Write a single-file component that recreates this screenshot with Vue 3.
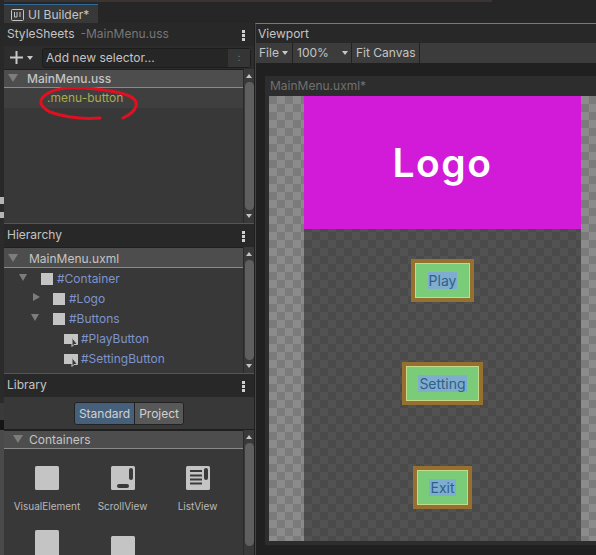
<script setup>
const tree = [
  { name: '#Container', indent: 15, arrow: 'down', icon: 'box' },
  { name: '#Logo', indent: 27, arrow: 'right', icon: 'box' },
  { name: '#Buttons', indent: 27, arrow: 'down', icon: 'box' },
  { name: '#PlayButton', indent: 38, icon: 'button' },
  { name: '#SettingButton', indent: 38, icon: 'button' }
]
const buttons = ['Play', 'Setting', 'Exit']
</script>

<template>
  <div class="app">
    <i class="edge"></i>
    <div class="topbar">
      <div class="tab">
        <svg class="tab-icon" width="13" height="12" viewBox="0 0 13 12">
          <rect x="0.5" y="0.5" width="12" height="11" rx="1" fill="none" stroke="#c4c4c4" />
          <path d="M3.500 3v5h2.500V3M9 3v5" fill="none" stroke="#c4c4c4" />
        </svg>
        <span>UI Builder*</span>
      </div>
      <span class="clipped">Visual Element</span>
    </div>

    <div class="main">
      <aside class="left">
        <section class="panel sheets">
          <header class="panel-head">
            <span>StyleSheets</span><span class="file-hint">-MainMenu.uss</span>
            <i class="dots"></i>
          </header>
          <div class="selector-bar">
            <div class="plus">
              <svg width="13" height="13" viewBox="0 0 13 13"><path d="M6.500 0v13M0 6.500h13" stroke="#c8c8c8" stroke-width="2" /></svg>
              <i class="caret"></i>
            </div>
            <div class="selector-input"><span>Add new selector...</span><b>:</b></div>
          </div>
          <div class="list">
            <div class="list-body">
              <div class="list-title"><i class="tri down"></i><span>MainMenu.uss</span></div>
              <div class="selector-row"><span>.menu-button</span></div>
            </div>
            <div class="scroll"><i class="up"></i><div class="thumb"></div><i class="dn"></i></div>
          </div>
          <svg class="scribble" width="110" height="40" viewBox="0 0 110 40">
            <path d="M61 31C48 32 28 31 11 25C4 21 1 18 2 14C3 8 14 2 28 1C44 0 74 3 88 8C96 11 98 15 97 19C96 24 92 27 84 31" fill="none" stroke="#e01020" stroke-width="3" stroke-linecap="round" />
          </svg>
        </section>

        <section class="panel hierarchy">
          <header class="panel-head"><span>Hierarchy</span><i class="dots"></i></header>
          <div class="list">
            <div class="list-body">
              <div class="list-title tall"><i class="tri down"></i><span class="uxml">MainMenu.uxml</span></div>
              <div class="tree">
                <div v-for="item in tree" :key="item.name" class="tree-row" :style="{ paddingLeft: item.indent + 'px' }">
                  <i class="tree-arrow" :class="item.arrow"></i>
                  <i v-if="item.icon === 'box'" class="box"></i>
                  <svg v-else class="btn-icon" width="15" height="13" viewBox="0 0 15 13">
                    <rect x="0" y="0" width="14" height="10" fill="#c4c4c4" />
                    <path d="M8 3.500v9l2-2h3.500z" fill="#3a3a3a" stroke="#c4c4c4" />
                  </svg>
                  <span>{{ item.name }}</span>
                </div>
              </div>
            </div>
            <div class="scroll"><i class="up"></i><div class="thumb"></div><i class="dn"></i></div>
          </div>
        </section>

        <section class="panel library">
          <header class="panel-head"><span>Library</span><i class="dots"></i></header>
          <div class="lib-tabs">
            <div class="segment">
              <span class="seg on">Standard</span>
              <span class="seg">Project</span>
            </div>
          </div>
          <div class="list">
            <div class="list-body">
              <div class="list-title plain"><i class="tri down small"></i><span>Containers</span></div>
              <div class="lib-grid">
                <div class="lib-item">
                  <i class="lib-icon"></i>
                  <span>VisualElement</span>
                </div>
                <div class="lib-item">
                  <svg class="lib-svg" width="24" height="24" viewBox="0 0 24 24">
                    <rect width="24" height="24" rx="1.500" fill="#c4c4c4" />
                    <rect x="18" y="2" width="4" height="12" rx="2" fill="#3a3a3a" />
                    <rect x="6" y="18" width="12" height="4" rx="2" fill="#3a3a3a" />
                  </svg>
                  <span>ScrollView</span>
                </div>
                <div class="lib-item">
                  <svg class="lib-svg" width="24" height="24" viewBox="0 0 24 24">
                    <rect width="24" height="24" rx="1.500" fill="#c4c4c4" />
                    <path d="M4 5h12M4 9.500h12M4 13.500h12M4 17.500h12" stroke="#3a3a3a" stroke-width="2" />
                    <rect x="18" y="2" width="4" height="12" rx="2" fill="#3a3a3a" />
                  </svg>
                  <span>ListView</span>
                </div>
                <div class="lib-item"><i class="lib-icon tall"></i></div>
                <div class="lib-item"><i class="lib-icon low"></i></div>
              </div>
            </div>
            <div class="scroll"><i class="up"></i><div class="thumb"></div></div>
          </div>
        </section>
      </aside>

      <section class="viewport">
        <header class="vp-title">Viewport</header>
        <div class="vp-tools">
          <div class="tool file">File<i class="caret"></i></div>
          <div class="tool zoom">100%<i class="caret"></i></div>
          <div class="tool fit">Fit Canvas</div>
        </div>
        <div class="stage">
          <div class="doc">
            <div class="doc-title">MainMenu.uxml*</div>
            <div class="canvas">
              <div class="screen">
                <div class="logo">Logo</div>
                <div class="buttons">
                  <div v-for="label in buttons" :key="label" class="menu-btn"><span>{{ label }}</span></div>
                </div>
              </div>
            </div>
          </div>
        </div>
      </section>
    </div>
  </div>
</template>

<style scoped>
.app { width: 596px; height: 555px; overflow: hidden; background: #1f1f1f; color: #c4c4c4; font: 12px/16px Inter, "Liberation Sans", sans-serif; display: flex; flex-direction: column; position: relative; }
i { display: block; font-style: normal; }

.edge { position: absolute; left: 0; top: 0; width: 4px; height: 555px; z-index: 2; background: linear-gradient(#282828 197px, #b5b5b5 197px 204px, #2a2a2a 204px 212px, #b5b5b5 212px 218px, #2b2b2b 218px 403px, #3a3a3a 403px 420px, #151515 420px 430px, #4a4a4a 430px); }

.topbar { height: 23px; flex: none; padding: 4px 0 0 4px; box-sizing: border-box; background: linear-gradient(#3a3532, #3a3532) 0 0 / 492px 2px no-repeat, #262626; position: relative; overflow: hidden; }
.tab { width: 94px; height: 19px; box-sizing: border-box; background: #383838; border-top: 1px solid #2f6a9c; display: flex; align-items: center; gap: 4px; padding: 2px 0 0 7px; font-size: 12px; }
.clipped { position: absolute; left: 517px; top: -14px; font-size: 13px; color: #aaa; white-space: nowrap; }

.main { flex: 1; display: flex; min-height: 0; }
.left { width: 250px; margin-left: 4px; flex: none; display: flex; flex-direction: column; }
.panel { display: flex; flex-direction: column; position: relative; box-sizing: border-box; }
.sheets { height: 201px; border-bottom: 1px solid #555; }
.hierarchy { height: 150px; border-bottom: 1px solid #555; }
.library { flex: 1; min-height: 0; }

.panel-head { height: 23px; flex: none; background: #282828; display: flex; align-items: center; padding: 0 0 2px 3px; box-sizing: border-box; font-size: 12px; color: #c4c4c4; position: relative; }
.file-hint { margin-left: 6px; color: #777; }
.dots { position: absolute; right: 9px; top: 7px; width: 3px; height: 3px; background: #d0d0d0; box-shadow: 0 4px #d0d0d0, 0 8px #d0d0d0; }

.selector-bar { height: 23px; flex: none; background: #2d2d2d; display: flex; align-items: center; }
.plus { width: 38px; flex: none; display: flex; align-items: center; gap: 4px; padding-left: 6px; box-sizing: border-box; }
.caret { width: 0; height: 0; border: 3.500px solid transparent; border-top: 4px solid #c8c8c8; border-bottom: 0; }
.selector-input { width: 209px; height: 20px; background: #262626; border: 1px solid #1d1d1d; border-radius: 3px; display: flex; align-items: center; justify-content: space-between; padding-left: 3px; box-sizing: border-box; font-size: 12px; }
.selector-input b { width: 22px; height: 18px; background: #353535; color: #777; text-align: center; font-weight: 400; font-size: 10px; }

.list { flex: 1; min-height: 0; display: flex; background: #383838; overflow: hidden; }
.list-body { flex: 1; min-width: 0; overflow: hidden; }
.list-title { height: 19px; box-sizing: border-box; background: #4d4d4d; border-bottom: 1px solid #8a8a8a; border-top: 1px solid #1f1f1f; display: flex; align-items: center; font-weight: 500; color: #c4c4c4; }
.list-title.tall { height: 21px; padding-top: 3px; }
.list-title.plain { font-weight: 400; }
.list-title span { margin-left: 9px; }
.list-title .uxml { margin-left: 11px; font-weight: 400; }
.tri.down { margin-left: 4px; width: 0; height: 0; border: 5px solid transparent; border-top: 8px solid #7d7d7d; border-bottom: 0; margin-top: -2px; }
.tri.small { margin-left: 9px; margin-right: 3px; }

.selector-row { height: 20px; background: #3f3f3f; display: flex; align-items: center; padding-left: 43px; color: #a9ab4e; }

.scroll { width: 11px; flex: none; background: #393939; border-left: 1px solid #2a2a2a; box-sizing: border-box; display: flex; flex-direction: column; align-items: center; padding: 5px 0; }
.scroll .thumb { width: 9px; flex: 1; background: #5f5f5f; border-radius: 5px; margin: 4px 0; }
.up, .dn { width: 0; height: 0; border: 3.500px solid transparent; flex: none; }
.up { border-bottom: 4px solid #c4c4c4; border-top: 0; }
.dn { border-top: 4px solid #c4c4c4; border-bottom: 0; }

.scribble { position: absolute; left: 35px; top: 64px; pointer-events: none; }

.tree { padding-top: 1px; }
.tree-row { height: 20px; display: flex; align-items: center; color: #7c94cf; font-size: 12px; }
.tree-arrow { width: 22px; height: 12px; flex: none; position: relative; }
.tree-arrow.down::after { content: ""; position: absolute; left: 0; top: 1px; border: 4px solid transparent; border-top: 7px solid #7d7d7d; border-bottom: 0; }
.tree-arrow.right::after { content: ""; position: absolute; left: 2px; top: 0; border: 4px solid transparent; border-left: 7px solid #7d7d7d; border-right: 0; }
.box { width: 12px; height: 12px; background: #c4c4c4; flex: none; margin-right: 4px; }
.btn-icon { margin: 2px 2px 0 0; flex: none; }

.lib-tabs { height: 33px; flex: none; background: #383838; display: flex; justify-content: center; align-items: center; border-bottom: 1px solid #1f1f1f; box-sizing: border-box; padding-top: 1px; }
.segment { display: flex; height: 21px; border: 1px solid #222; border-radius: 3px; overflow: hidden; }
.seg { background: #585858; padding: 0 4px; display: flex; align-items: center; color: #d0d0d0; }
.seg.on { background: #46607c; border-right: 1px solid #222; }

.library .list-title span { margin-left: 3px; }
.lib-grid { display: grid; grid-template-columns: 76px 75px 75px; padding-left: 5px; padding-top: 17px; grid-auto-rows: 64px; font-size: 10px; color: #b8b8b8; }
.lib-item { display: flex; flex-direction: column; align-items: center; gap: 8px; white-space: nowrap; }
.lib-icon { width: 24px; height: 24px; background: #c4c4c4; border-radius: 1.500px; flex: none; }
.lib-icon.tall { height: 30px; }
.lib-icon.low { margin-top: 6px; }
.lib-svg { flex: none; }

.viewport { flex: 1; min-width: 0; margin-left: 1px; display: flex; flex-direction: column; background: #202020; border-top: 1px solid #2a8fd8; border-left: 1px solid #444; box-sizing: border-box; }
.vp-title { height: 19px; flex: none; background: #282828; padding-left: 2px; line-height: 20px; }
.vp-tools { height: 20px; flex: none; background: #3c3c3c; display: flex; }
.tool { display: flex; align-items: center; padding-left: 3px; gap: 3px; background: #3c3c3c; border-right: 1px solid #222; box-sizing: border-box; }
.tool.file { width: 37px; }
.tool.zoom { width: 59px; padding-left: 4px; justify-content: space-between; padding-right: 3px; }
.tool.fit { width: 68px; padding-left: 4px; }

.stage { flex: 1; min-height: 0; padding: 13px 0 0 9px; }
.doc { height: 469px; background: #2d2d2d; padding: 0 0 4px 4px; box-sizing: border-box; display: flex; flex-direction: column; }
.doc-title { height: 20px; flex: none; color: #707070; padding-left: 1px; line-height: 19px; }
.canvas { flex: 1; min-height: 0; padding: 0 15px 0 35px; background-color: #7b7b7b; background-image: conic-gradient(#8b8b8b 25%, #7b7b7b 0 50%, #8b8b8b 0 75%, #7b7b7b 0); background-size: 16px 16px; }
.screen { height: 100%; display: flex; flex-direction: column; background-color: #4a4a4a; background-image: conic-gradient(#525252 25%, #4a4a4a 0 50%, #525252 0 75%, #4a4a4a 0); background-size: 16px 16px; }
.logo { height: 133px; flex: none; background: #d21bd8; color: #fff; display: flex; align-items: center; justify-content: center; font-size: 39px; font-weight: 600; letter-spacing: 1.500px; }
.buttons { flex: 1; display: flex; flex-direction: column; justify-content: space-around; align-items: center; padding-bottom: 2px; }
.menu-btn { box-sizing: border-box; height: 43px; border: 4px solid #96702f; background: #7bcc79; outline: 1px solid #c5d98a; outline-offset: -5px; display: flex; align-items: center; justify-content: center; padding: 0 12.500px; }
.menu-btn span { display: block; height: 17px; line-height: 17px; background: #7fadd0; color: #2f6186; font-size: 14px; padding: 0 1px; }
</style>
